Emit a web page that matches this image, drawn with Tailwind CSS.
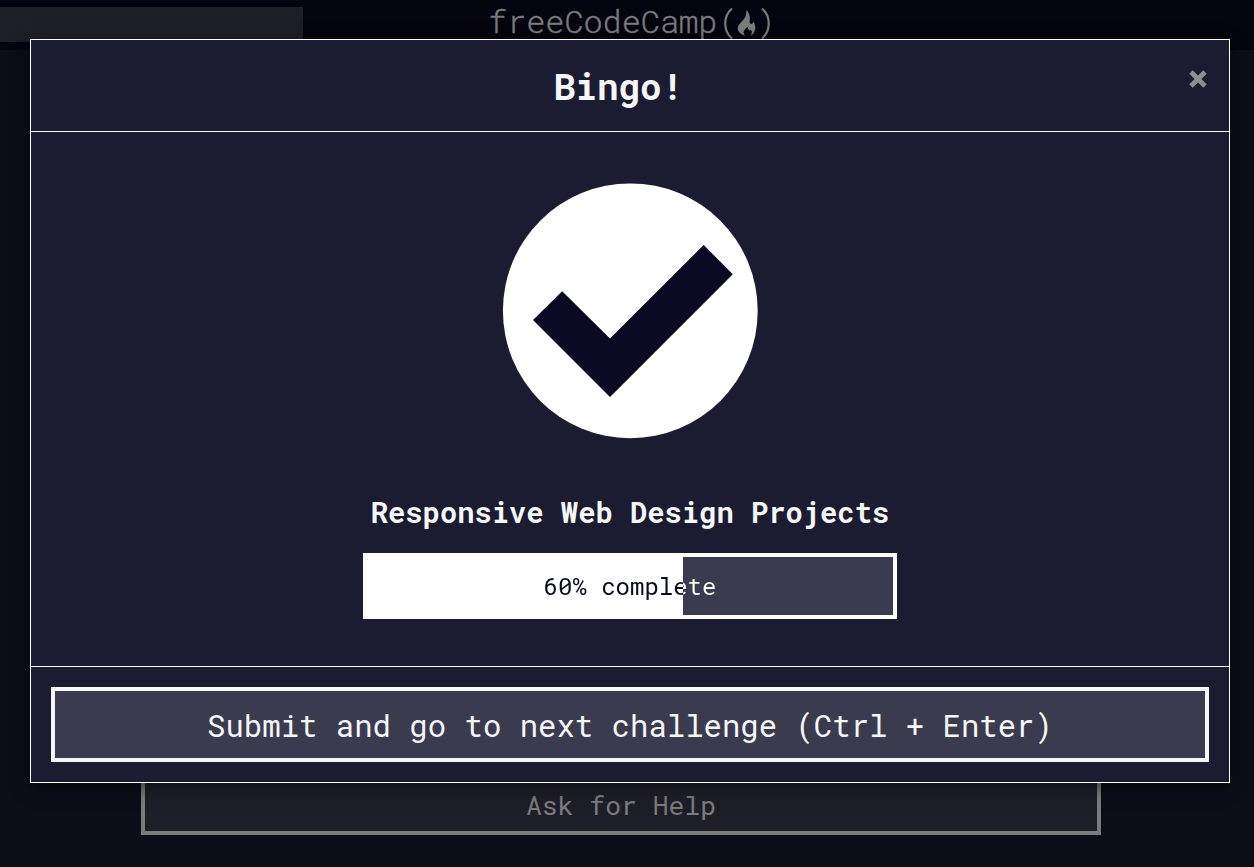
<!DOCTYPE html>
<html lang="en">
<head>
<meta charset="utf-8">
<title>Bingo!</title>
<script src="https://cdn.jsdelivr.net/npm/@tailwindcss/browser@4"></script>
</head>
<body class="relative h-[867px] w-[1254px] overflow-hidden bg-[#0d0d18] font-['Roboto_Mono','DejaVu_Sans_Mono',monospace] text-[#f5f6f7]">
  <div class="flex h-full flex-col justify-between">
    <header class="flex h-[50px] items-start bg-[#04040f]">
      <div class="mt-[7px] h-[35px] w-[303px] bg-[#1e1e27]"></div>
      <div class="ml-[185px] flex h-[42px] items-center text-[32px] text-[#7b7b7b]">
        <span class="font-light tracking-[-0.1px] [-webkit-text-stroke:0.4px_#7b7b7b]">freeCodeCamp</span>
        <svg class="ml-[3px] h-[42px] w-[54px]" viewBox="0 0 54 42" fill="none">
          <path d="M12 8.500C3 16 3 31 12 38.500M42 8.500C51 16 51 31 42 38.500" stroke="#7b7b7b" stroke-width="2.200"/>
          <path d="M26 10C29 12 30 15.500 29.800 18.500C29.700 21 29.300 22.500 30.500 24C32.500 24 33.300 23 33.300 21.500C35 23.500 35.800 27 35 30C34.200 33 32.500 34.800 30.500 36C32 33.500 32.300 31.500 31 30C29.500 31 27.800 30 28 27C25.500 28 23.300 31 23.700 33C24 34.700 24.700 35.500 25.500 36C20.500 34.500 17 31 17.800 27.500C18.800 23.500 23.500 20.500 25.300 17C26.500 14.500 26.600 12 26 10Z" fill="#7b7b7b"/>
        </svg>
      </div>
    </header>
    <button class="mb-8 ml-[141px] flex h-[75px] w-[960px] items-center justify-center border-4 border-[#7b7b7a] bg-[#1e1e27] pt-3.5 text-[26.400px] text-[#7b7b7b]">Ask for Help</button>
  </div>

  <section role="dialog" class="absolute left-[30px] top-[39px] flex h-[744px] w-[1200px] flex-col border border-white bg-[#1b1b32] shadow-[0_5px_15px_rgba(0,0,0,0.5)]">
    <header class="flex h-[92px] items-center border-b border-white pl-[19px] pr-5">
      <h1 class="flex-1 text-center text-[36px] font-bold leading-none">Bingo!</h1>
      <button aria-label="Close" class="mb-3.5 flex size-[22px] items-center justify-center">
        <svg class="size-[22px]" viewBox="0 0 22 22"><path d="M4 4L18 18M18 4L4 18" stroke="#8d8d98" stroke-width="4.800"/></svg>
      </button>
    </header>
    <main class="flex flex-1 flex-col items-center pt-[51px]">
      <svg class="size-64 shrink-0" viewBox="502 183 256 256">
        <circle cx="630.300" cy="310.800" r="127.400" fill="#fff"/>
        <path d="M533 320L562.200 291.300L610 338.500L703.700 245L732.800 274.300L610 397Z" fill="#0a0a23"/>
      </svg>
      <h2 class="mt-[54px] flex h-10 items-center whitespace-nowrap text-[28.800px] font-bold">Responsive Web Design Projects</h2>
      <div class="mt-5 h-[66px] w-[534px] border-4 border-white bg-linear-to-r from-white from-[316px] to-[#3b3b4f] to-[316px]">
        <div class="flex h-full items-center justify-center bg-linear-to-r from-[#0a0a23] from-[316px] to-white to-[316px] bg-clip-text text-[24px] text-transparent">60% complete</div>
      </div>
    </main>
    <footer class="h-[116px] border-t border-white p-5">
      <button class="flex h-[75px] w-full items-center justify-center border-4 border-[#f5f6f7] bg-[#3b3b4f] pt-0.5 text-[30.650px]">Submit and go to next challenge (Ctrl + Enter)</button>
    </footer>
  </section>
</body>
</html>
